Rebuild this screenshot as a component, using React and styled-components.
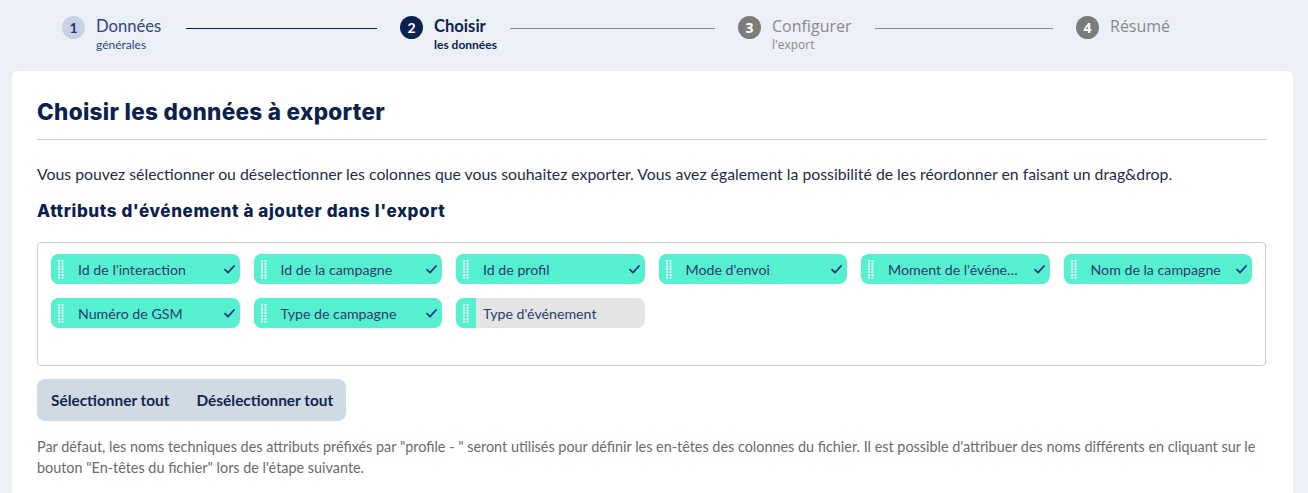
import styled, { createGlobalStyle } from "styled-components";

const GlobalStyle = createGlobalStyle`
  body {
    margin: 0;
    background: #ebf0f7;
    font-family: Lato, "Noto Sans", sans-serif;
    color: #14254f;
  }
`

const Page = styled.div`
  width: 1308px;
  height: 493px;
  overflow: hidden;
`

const Stepper = styled.div`
  display: grid;
  grid-template-columns: repeat(4, 338px);
  padding: 15px 0 0 62px;
  height: 56px;
`

const Step = styled.div`
  display: flex;
  align-items: flex-start;
`

const StepCircle = styled.div`
  flex: none;
  width: 23px;
  height: 23px;
  border-radius: 50%;
  display: flex;
  align-items: center;
  justify-content: center;
  font-size: 14px;
  font-weight: 700;
  margin-top: 1px;
  background: ${({ state }) =>
    state === "done" ? "#c9d1e4" : state === "active" ? "#0b2150" : "#7c7c7c"};
  color: ${({ state }) => (state === "done" ? "#23397a" : "#fff")};
  font-family: ${({ state }) => (state === "todo" ? '"Open Sans", sans-serif' : "Lato, sans-serif")};
`

const StepLabel = styled.div`
  margin-left: 11px;
  display: flex;
  flex-direction: column;
  font-family: ${({ state }) => (state === "todo" ? '"Open Sans", sans-serif' : "Lato, sans-serif")};
  color: ${({ state }) =>
    state === "done" ? "#2e4585" : state === "active" ? "#0b2150" : "#8a8a8a"};
  font-weight: ${({ state }) => (state === "active" ? 700 : 400)};
`

const StepTitle = styled.span`
  font-size: ${({ state }) => (state === "todo" ? 16 : 16.6)}px;
  line-height: 22px;
`

const StepSub = styled.span`
  font-size: 12px;
  line-height: 16px;
`

const Connector = styled.div`
  flex: 1;
  height: 1px;
  margin: 13px 23px 0 ${({ gap }) => gap}px;
  background: ${({ dark }) => (dark ? "#0b2150" : "#8a8a8a")};
`

const Card = styled.div`
  margin: 0 15px 0 12px;
  background: #fff;
  border-radius: 6px;
  padding: 26px 27px 30px 25px;
`

const Title = styled.h1`
  margin: 0;
  font-family: Inter, sans-serif;
  font-weight: 800;
  font-size: 22.5px;
  line-height: 30px;
  letter-spacing: 0.32px;
  color: #0b2150;
  padding-bottom: 12px;
  border-bottom: 1px solid #cfcfcf;
`

const Intro = styled.p`
  margin: 23px 0 0;
  font-size: 15.8px;
  line-height: 22px;
  color: #1d2b50;
`

const SubTitle = styled.h2`
  margin: 14px 0 0;
  font-family: Inter, sans-serif;
  font-weight: 800;
  font-size: 17px;
  line-height: 24px;
  letter-spacing: 0.6px;
  color: #0b2150;
`

const ChipBox = styled.div`
  margin-top: 19px;
  border: 1px solid #cccccc;
  border-radius: 4px;
  padding: 11px 13px;
  min-height: 100px;
  display: grid;
  grid-template-columns: repeat(6, 1fr);
  grid-auto-rows: 30px;
  gap: 14px 14px;
  align-content: start;
`

const Chip = styled.div`
  display: flex;
  align-items: center;
  height: 30px;
  border-radius: 8px;
  overflow: hidden;
  background: ${({ selected }) => (selected ? "#55f0d0" : "#e4e4e4")};
`

const Handle = styled.div`
  flex: none;
  width: 20px;
  height: 100%;
  display: flex;
  align-items: center;
  justify-content: center;
  background: #55f0d0;
`

const ChipText = styled.span`
  flex: 1;
  min-width: 0;
  padding-left: 7px;
  font-size: 14.2px;
  color: #2b3a6e;
  white-space: nowrap;
  overflow: hidden;
  text-overflow: ellipsis;
`

const CheckMark = styled.svg`
  flex: none;
  margin: 0 5px 0 6px;
`

const ButtonGroup = styled.div`
  display: inline-flex;
  margin-top: 13px;
  height: 42px;
  background: #cfdae4;
  border-radius: 8px;
  padding: 0 13px 0 14px;
  gap: 27px;
  align-items: center;
`

const GroupButton = styled.button`
  border: none;
  background: none;
  padding: 0;
  font-family: Lato, sans-serif;
  font-weight: 700;
  font-size: 15.4px;
  color: #14254f;
`

const Note = styled.p`
  margin: 15px 0 0;
  font-size: 14.4px;
  line-height: 21px;
  color: #6b6b6b;
`

const steps = [
  { n: 1, title: "Données", sub: "générales", state: "done", gap: 25 },
  { n: 2, title: "Choisir", sub: "les données", state: "active", gap: 13 },
  { n: 3, title: "Configurer", sub: "l'export", state: "todo", gap: 23 },
  { n: 4, title: "Résumé", sub: "", state: "todo" },
]

const attributes = [
  { label: "Id de l'interaction", selected: true },
  { label: "Id de la campagne", selected: true },
  { label: "Id de profil", selected: true },
  { label: "Mode d'envoi", selected: true },
  { label: "Moment de l'événement", selected: true },
  { label: "Nom de la campagne", selected: true },
  { label: "Numéro de GSM", selected: true },
  { label: "Type de campagne", selected: true },
  { label: "Type d'événement", selected: false },
]

function DragDots() {
  return (
    <svg width="6" height="19" viewBox="0 0 6 19">
      {Array.from({ length: 7 }, (_, i) => (
        <g key={i} fill="#fff">
          <rect x="0" y={i * 2.8} width="2" height="1.8" />
          <rect x="3.5" y={i * 2.8} width="2" height="1.8" />
        </g>
      ))}
    </svg>
  )
}

function App() {
  return (
    <Page>
      <GlobalStyle />
      <Stepper>
        {steps.map((step, i) => (
          <Step key={step.n}>
            <StepCircle state={step.state}>{step.n}</StepCircle>
            <StepLabel state={step.state}>
              <StepTitle state={step.state}>{step.title}</StepTitle>
              {step.sub && <StepSub>{step.sub}</StepSub>}
            </StepLabel>
            {i < steps.length - 1 && <Connector gap={step.gap} dark={i === 0} />}
          </Step>
        ))}
      </Stepper>

      <Card>
        <Title>Choisir les données à exporter</Title>
        <Intro>
          Vous pouvez sélectionner ou déselectionner les colonnes que vous souhaitez exporter. Vous avez également la possibilité de les réordonner en faisant un drag&amp;drop.
        </Intro>
        <SubTitle>Attributs d'événement à ajouter dans l'export</SubTitle>

        <ChipBox>
          {attributes.map((attr) => (
            <Chip key={attr.label} selected={attr.selected}>
              <Handle>
                <DragDots />
              </Handle>
              <ChipText>{attr.label}</ChipText>
              {attr.selected && (
                <CheckMark width="11" height="9" viewBox="0 0 11 9">
                  <path d="M1 4.6 L4 7.6 L10 1" fill="none" stroke="#22357a" strokeWidth="1.8" strokeLinecap="round" strokeLinejoin="round" />
                </CheckMark>
              )}
            </Chip>
          ))}
        </ChipBox>

        <ButtonGroup>
          <GroupButton>Sélectionner tout</GroupButton>
          <GroupButton>Désélectionner tout</GroupButton>
        </ButtonGroup>

        <Note>
          Par défaut, les noms techniques des attributs préfixés par "profile - " seront utilisés pour définir les en-têtes des colonnes du fichier. Il est possible d'attribuer des noms différents en cliquant sur le bouton "En-têtes du fichier" lors de l'étape suivante.
        </Note>
      </Card>
    </Page>
  )
}

export default App;
